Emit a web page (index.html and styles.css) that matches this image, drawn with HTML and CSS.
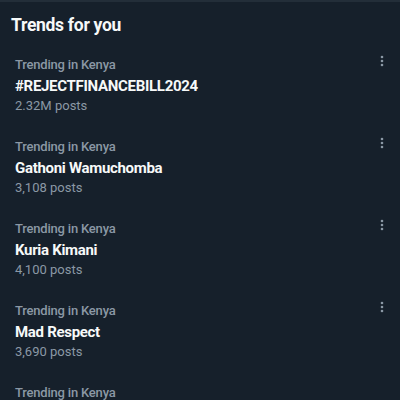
FILE: index.html
```html
<!doctype html>
<html lang="en">
    <head>
        <meta charset="UTF-8" />
        <title>Trends for you</title>
        <link rel="stylesheet" href="styles.css">
    </head>
    <body>
        <section class="trends">
            <h2 class="trends-title">Trends for you</h2>

            <div class="trend">
                <div class="trend-text">
                    <div class="trend-meta">Trending in Kenya</div>
                    <div class="trend-name">#REJECTFINANCEBILL2024</div>
                    <div class="trend-count">2.32M posts</div>
                </div>
                <button type="button" class="more" aria-label="More">
                    <svg width="4" height="12" viewBox="0 0 4 12"><circle cx="2" cy="2" r="1.3"/><circle cx="2" cy="6" r="1.3"/><circle cx="2" cy="10" r="1.3"/></svg>
                </button>
            </div>

            <div class="trend">
                <div class="trend-text">
                    <div class="trend-meta">Trending in Kenya</div>
                    <div class="trend-name">Gathoni Wamuchomba</div>
                    <div class="trend-count">3,108 posts</div>
                </div>
                <button type="button" class="more" aria-label="More">
                    <svg width="4" height="12" viewBox="0 0 4 12"><circle cx="2" cy="2" r="1.3"/><circle cx="2" cy="6" r="1.3"/><circle cx="2" cy="10" r="1.3"/></svg>
                </button>
            </div>

            <div class="trend">
                <div class="trend-text">
                    <div class="trend-meta">Trending in Kenya</div>
                    <div class="trend-name">Kuria Kimani</div>
                    <div class="trend-count">4,100 posts</div>
                </div>
                <button type="button" class="more" aria-label="More">
                    <svg width="4" height="12" viewBox="0 0 4 12"><circle cx="2" cy="2" r="1.3"/><circle cx="2" cy="6" r="1.3"/><circle cx="2" cy="10" r="1.3"/></svg>
                </button>
            </div>

            <div class="trend">
                <div class="trend-text">
                    <div class="trend-meta">Trending in Kenya</div>
                    <div class="trend-name">Mad Respect</div>
                    <div class="trend-count">3,690 posts</div>
                </div>
                <button type="button" class="more" aria-label="More">
                    <svg width="4" height="12" viewBox="0 0 4 12"><circle cx="2" cy="2" r="1.3"/><circle cx="2" cy="6" r="1.3"/><circle cx="2" cy="10" r="1.3"/></svg>
                </button>
            </div>

            <div class="trend">
                <div class="trend-text">
                    <div class="trend-meta">Trending in Kenya</div>
                </div>
            </div>
        </section>
    </body>
</html>
```

FILE: styles.css
```css
body {
    margin: 0;
    background-color: #16202b;
    font-family: Roboto, "Noto Sans", sans-serif;
    color: #f7f9f9;
    height: 400px;
    overflow: hidden;
}
.trends {
    border-top: 2px solid #232e39;
}
.trends-title {
    margin: 0;
    padding: 11px 11px 7px;
    font-size: 17.5px;
    line-height: 24px;
    font-weight: 700;
    letter-spacing: -0.3px;
}
.trend {
    display: flex;
    justify-content: space-between;
    align-items: flex-start;
    padding: 12px 15px 12px;
}
.trend-meta {
    color: #8b98a5;
    font-size: 13px;
    line-height: 17px;
    font-weight: 500;
    letter-spacing: -0.2px;
}
.trend-name {
    margin-top: 3px;
    font-size: 15px;
    line-height: 20px;
    font-weight: 700;
    letter-spacing: -0.3px;
}
.trend-count {
    margin-top: 2px;
    color: #8b98a5;
    font-size: 13px;
    line-height: 16px;
}
.more {
    margin: -1px 1px 0 0;
    padding: 0;
    border: none;
    background: none;
    fill: #8b98a5;
    cursor: pointer;
    line-height: 0;
}
```
